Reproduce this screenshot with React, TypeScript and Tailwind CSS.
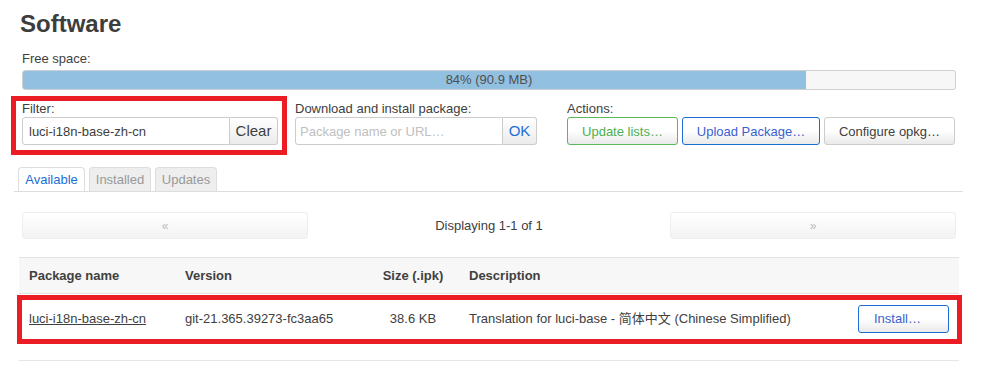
import React from "react";

const btn =
  "h-[28px] rounded-[3px] border bg-gradient-to-b from-white via-white to-[#e9e9e9] flex items-center justify-center text-[13px] leading-none";

export default function App() {
  return (
    <div className="relative w-[993px] h-[368px] overflow-hidden bg-white font-['Liberation_Sans','Noto_Sans_CJK_SC',Arial,sans-serif] text-[13px] text-[#404040]">
      <div className="ml-[20px] mt-[10px] h-[28px] leading-[28px] text-[24px] font-bold text-[#3d3d3d]">
        Software
      </div>

      <div className="ml-[22px] mt-[12px] leading-[18px]">Free space:</div>
      <div className="ml-[22px] mt-[2px] w-[934px] h-[20px] relative rounded-[3px] border border-[#cfcfcf] bg-[#f7f7f7] overflow-hidden">
        <div className="h-full w-[84%] bg-[#92c0e1]" />
        <div className="absolute inset-0 flex items-center justify-center text-[13px] text-[#505050]">
          84% (90.9 MB)
        </div>
      </div>

      <div className="flex ml-[22px] mt-[10px]">
        <div className="w-[256px]">
          <div className="h-[17px] leading-[18px]">Filter:</div>
          <div className="flex h-[28px]">
            <input
              readOnly
              value="luci-i18n-base-zh-cn"
              className="w-[208px] h-[28px] rounded-l-[3px] border border-[#cccccc] px-[6px] text-[13px] text-[#404040] outline-none"
            />
            <div className="w-[48px] h-[28px] rounded-r-[3px] border border-l-0 border-[#cccccc] bg-gradient-to-b from-white to-[#ebebeb] flex items-center justify-center text-[15px] text-[#404040]">
              Clear
            </div>
          </div>
        </div>

        <div className="w-[242px] ml-[17px]">
          <div className="h-[17px] leading-[18px]">Download and install package:</div>
          <div className="flex h-[28px]">
            <input
              readOnly
              placeholder="Package name or URL…"
              className="w-[208px] h-[28px] rounded-l-[3px] border border-[#cccccc] px-[4px] text-[13px] placeholder:text-[#c0c0c0] outline-none"
            />
            <div className="w-[34px] h-[28px] rounded-r-[3px] border border-l-0 border-[#cccccc] bg-gradient-to-b from-white to-[#ebebeb] flex items-center justify-center text-[15px] text-[#1e6fd8]">
              OK
            </div>
          </div>
        </div>

        <div className="ml-[30px]">
          <div className="h-[17px] leading-[18px]">Actions:</div>
          <div className="flex gap-[4px]">
            <div className={`${btn} w-[111px] border-[#5cb85c] text-[#4caf50]`}>Update lists…</div>
            <div className={`${btn} w-[138px] border-[#1a6fd6] text-[#3a5fd0]`}>Upload Package…</div>
            <div className={`${btn} w-[131px] border-[#cccccc] text-[#404040]`}>Configure opkg…</div>
          </div>
        </div>
      </div>

      <div className="ml-[14px] mt-[22px] w-[949px] border-b border-[#dddddd] flex gap-[4px] pl-[4px]">
        <div className="h-[24px] w-[67px] rounded-t-[4px] border border-b-0 border-[#dddddd] bg-white flex items-center justify-center text-[13px] text-[#1a6fd6]">
          Available
        </div>
        <div className="h-[24px] w-[62px] rounded-t-[4px] border border-b-0 border-[#dddddd] bg-[#eeeeee] flex items-center justify-center text-[13px] text-[#999999]">
          Installed
        </div>
        <div className="h-[24px] w-[62px] rounded-t-[4px] border border-b-0 border-[#dddddd] bg-[#eeeeee] flex items-center justify-center text-[13px] text-[#999999]">
          Updates
        </div>
      </div>

      <div className="ml-[22px] mt-[20px] w-[934px] h-[27px] flex items-center">
        <div className="w-[286px] h-[27px] rounded-[3px] border border-[#eeeeee] bg-gradient-to-b from-white to-[#f3f3f3] flex items-center justify-center text-[12px] text-[#bbbbbb]">
          «
        </div>
        <div className="flex-1 text-center text-[13px]">Displaying 1-1 of 1</div>
        <div className="w-[286px] h-[27px] rounded-[3px] border border-[#eeeeee] bg-gradient-to-b from-white to-[#f3f3f3] flex items-center justify-center text-[12px] text-[#bbbbbb]">
          »
        </div>
      </div>

      <div className="ml-[19px] mt-[18px] w-[940px]">
        <div className="grid grid-cols-[156px_194px_88px_1fr_111px] h-[37px] items-center bg-[#f7f7f7] border-t border-b border-[#e2e2e2] font-bold text-[13px]">
          <div className="pl-[10px]">Package name</div>
          <div className="pl-[10px]">Version</div>
          <div className="text-center">Size (.ipk)</div>
          <div className="pl-[12px]">Description</div>
          <div />
        </div>
        <div className="grid grid-cols-[156px_194px_88px_1fr_111px] h-[49px] items-center text-[13px]">
          <div className="pl-[10px] underline">luci-i18n-base-zh-cn</div>
          <div className="pl-[10px]">git-21.365.39273-fc3aa65</div>
          <div className="text-center">38.6 KB</div>
          <div className="pl-[12px]">Translation for luci-base - 简体中文 (Chinese Simplified)</div>
          <div className="flex justify-end pr-[10px]">
            <div className="h-[28px] w-[91px] rounded-[3px] border border-[#1a6fd6] bg-gradient-to-b from-white via-white to-[#e9e9e9] flex items-center pl-[15px] text-[13px] leading-none text-[#3a5fd0]">
              Install…
            </div>
          </div>
        </div>
        <div className="mt-[17px] border-t border-[#e6e6e6]" />
      </div>

      <div className="absolute left-[11px] top-[96px] w-[276px] h-[59px] border-[5px] border-[#ec1c24] pointer-events-none" />
      <div className="absolute left-[17px] top-[295px] w-[945px] h-[49px] border-[5px] border-[#ec1c24] pointer-events-none" />
    </div>
  );
}
